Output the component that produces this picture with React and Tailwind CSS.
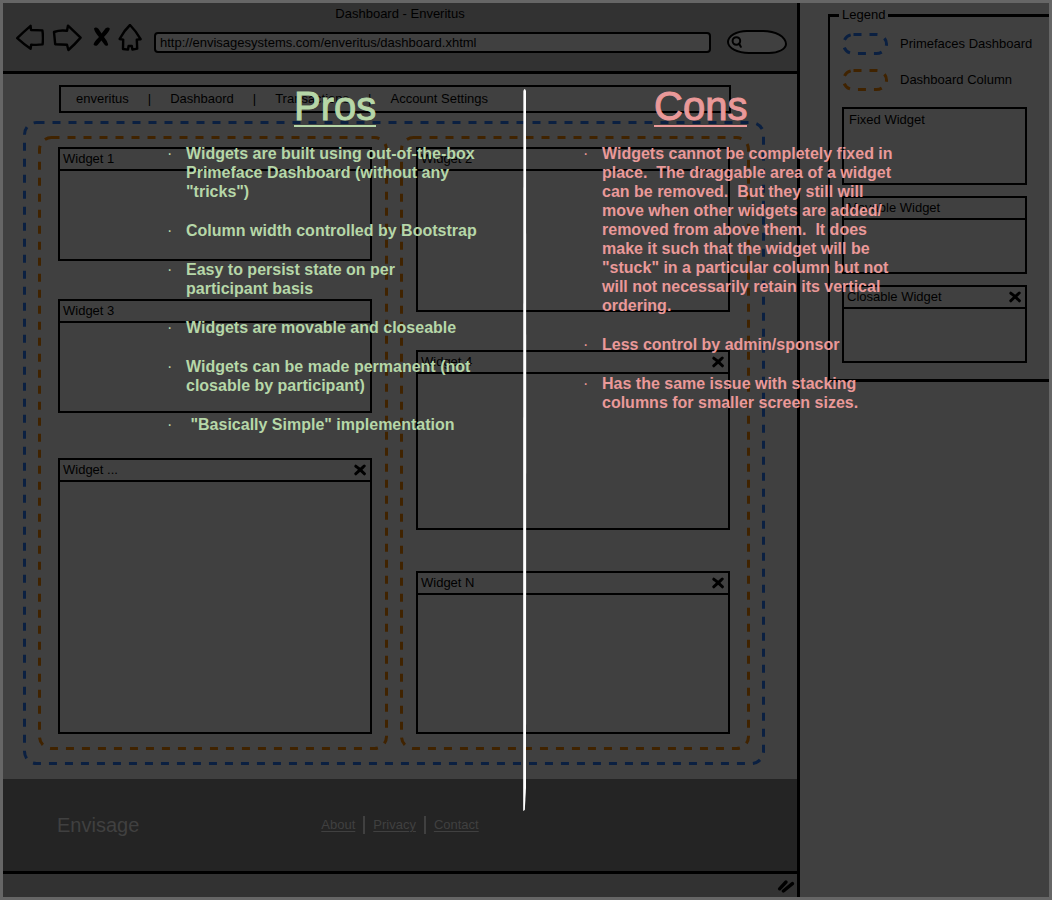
import React from "react";

const pros = [
  ["Widgets are built using out-of-the-box", "Primeface Dashboard (without any", "\"tricks\")"],
  ["Column width controlled by Bootstrap"],
  ["Easy to persist state on per", "participant basis"],
  ["Widgets are movable and closeable"],
  ["Widgets can be made permanent (not", "closable by participant)"],
  [" \"Basically Simple\" implementation"],
];

const cons = [
  [
    "Widgets cannot be completely fixed in",
    "place.  The draggable area of a widget",
    "can be removed.  But they still will",
    "move when other widgets are added/",
    "removed from above them.  It does",
    "make it such that the widget will be",
    "\"stuck\" in a particular column but not",
    "will not necessarily retain its vertical",
    "ordering.",
  ],
  ["Less control by admin/sponsor"],
  ["Has the same issue with stacking", "columns for smaller screen sizes."],
];

function DashedFrame({ className, radius = 12 }) {
  return (
    <svg aria-hidden="true" className={`pointer-events-none absolute inset-0 h-full w-full ${className}`}>
      <rect
        x="1.5"
        y="1.5"
        rx={radius}
        className="h-[calc(100%-3px)] w-[calc(100%-3px)]"
        fill="none"
        stroke="currentColor"
        strokeWidth="3"
        strokeDasharray="8 8"
      />
    </svg>
  );
}

function CloseIcon() {
  return (
    <svg viewBox="0 0 12 12" className="h-3 w-3" fill="none" stroke="#000" strokeLinecap="round" aria-hidden="true">
      <path d="M1.8 2.2 C4 3.6 8 7.4 10.4 9.8" strokeWidth="3" />
      <path d="M10.2 2 C8 4 4.6 7 1.8 9.8" strokeWidth="3" />
    </svg>
  );
}

function Widget({ title, closable, className }) {
  return (
    <section className={`border-2 border-black ${className}`}>
      <header className="flex h-[22px] items-center justify-between border-b-2 border-black pr-1 pl-[3px]">
        <h3>{title}</h3>
        {closable && (
          <button type="button" aria-label={`Close ${title}`}>
            <CloseIcon />
          </button>
        )}
      </header>
    </section>
  );
}

function Notes({ title, items, className, headingClass }) {
  return (
    <section className={`min-w-0 ${className}`}>
      <h2 className={`text-[40px] leading-[38px] [-webkit-text-stroke:1px_currentColor] ${headingClass}`}>
        <span className="inline-block border-b-2 border-current">{title}</span>
      </h2>
      <ul className="mt-[17px] flex flex-col gap-5 text-base leading-[19px] font-bold">
        {items.map((lines) => (
          <li key={lines[0]} className="flex">
            <span className="w-5 shrink-0 pl-px font-normal" aria-hidden="true">·</span>
            <div>
              {lines.map((line) => (
                <span key={line} className="block whitespace-pre">{line}</span>
              ))}
            </div>
          </li>
        ))}
      </ul>
    </section>
  );
}

function Toolbar() {
  const icon = { fill: "none", stroke: "#000", strokeWidth: 2.4, strokeLinejoin: "round", strokeLinecap: "round" };
  return (
    <div className="flex items-center pr-[10px] pl-[13px]">
      <div className="flex items-center gap-2">
        <button type="button" aria-label="Back">
          <svg viewBox="0 0 28 28" className="h-7 w-7" {...icon}>
            <path d="M1.2 14.2 Q8 7.4 14.6 1.8 L15 6 L26.4 6.4 Q27.4 13 26.6 20.4 Q21 21.2 15.2 20.6 L14.6 24.8 Q8 20.4 1.2 14.2 Z" />
          </svg>
        </button>
        <button type="button" aria-label="Forward">
          <svg viewBox="0 0 30 28" className="h-7 w-[30px]" {...icon}>
            <path d="M2 8 Q8 5.8 15 6.8 L16 1.6 L28.6 13.6 Q23 20.2 16.4 26 L15 20.8 L3.2 20.2 Z" />
          </svg>
        </button>
        <button type="button" aria-label="Stop">
          <svg viewBox="0 0 20 28" className="h-7 w-5" fill="#000">
            <path d="M4 4.6 Q5.6 2.4 8.4 4.8 L11.6 9.6 L15.6 4.2 Q18.4 2.6 19.8 4.6 Q20 7 14 13 Q17.4 17 18.2 20.6 Q17.6 22.8 15 21.2 L11.4 16.4 L7.6 21 Q5.4 22.8 3.6 20.8 Q3.4 18.6 9 13 Q4.4 8 4 4.6 Z" />
          </svg>
        </button>
        <button type="button" aria-label="Home">
          <svg viewBox="0 0 24 28" className="h-7 w-6" {...icon}>
            <path d="M12 1 Q17.6 6.6 22.6 15.2 L18.8 15.6 L19.2 24.6 L14.4 25.6 L13.8 22 L10.6 22 L10 25.6 L5 25 L5.2 15.6 L1.6 15 Q6 6.6 12 1 Z" />
          </svg>
        </button>
      </div>
      <input
        type="text"
        aria-label="Address"
        defaultValue="http://envisagesystems.com/enveritus/dashboard.xhtml"
        className="mt-2 ml-3 h-[21px] min-w-0 flex-1 rounded-[4px] border-2 border-black bg-[#404040] px-1 text-black"
      />
      <label className="mt-2 ml-4 flex h-6 w-[60px] items-center rounded-[20px_24px_18px_22px/12px_14px_10px_12px] border-2 border-black bg-[#404040] pl-[2px]">
        <svg viewBox="0 0 12 12" className="h-3 w-3 shrink-0" fill="none" stroke="#000" strokeWidth="2" strokeLinecap="round" aria-hidden="true">
          <circle cx="5.4" cy="5" r="3.8" />
          <path d="M8 7.6 L9.8 10.8" />
        </svg>
        <input type="search" aria-label="Search" className="w-full min-w-0 bg-transparent outline-none" />
      </label>
    </div>
  );
}

function Browser() {
  return (
    <div className="flex min-w-0 flex-1 flex-col border-r-3 border-black">
      <header className="h-[71px] border-b-3 border-black bg-[#323232]">
        <h1 className="pt-[3px] text-center leading-4">Dashboard - Enveritus</h1>
        <Toolbar />
      </header>

      <main className="flex-1 bg-[#404040] pt-[11px] pr-8 pb-[14px] pl-5">
        <nav className="mr-[34px] ml-9 flex h-[28px] items-center gap-[17px] border-2 border-black pl-[15px]">
          <a href="#enveritus">enveritus</a>
          <span className="px-0.5">|</span>
          <a href="#dashboard">Dashbaord</a>
          <span className="px-0.5">|</span>
          <a href="#transactions">Transactions</a>
          <span className="px-0.5">|</span>
          <a href="#settings">Account Settings</a>
        </nav>

        <div className="relative mt-2 grid grid-cols-2 gap-3 p-[15px]">
          <DashedFrame className="text-[#0b2041]" />
          <div className="relative flex flex-col pt-[11px] pr-4 pb-4 pl-5">
            <DashedFrame className="text-[#402300]" />
            <Widget title="Widget 1" className="h-[114px]" />
            <Widget title="Widget 3" className="mt-[38px] h-[114px]" />
            <Widget title="Widget ..." closable className="mt-[45px] h-[276px]" />
          </div>
          <div className="relative flex flex-col pt-[11px] pr-5 pb-4 pl-4">
            <DashedFrame className="text-[#402300]" />
            <Widget title="Widget 2" className="h-[165px]" />
            <Widget title="Widget 4" closable className="mt-[38px] h-[180px]" />
            <Widget title="Widget N" closable className="mt-[41px] h-[163px]" />
          </div>
        </div>
      </main>

      <footer className="grid h-[92px] grid-cols-[1fr_auto_1fr] items-center bg-[#242424] text-[#404040]">
        <div className="pl-[54px] text-xl">Envisage</div>
        <div className="flex items-center leading-4">
          <a href="#about" className="underline underline-offset-2">About</a>
          <span className="mx-2 h-[18px] w-0.5 bg-[#404040]" />
          <a href="#privacy" className="underline underline-offset-2">Privacy</a>
          <span className="mx-2 h-[18px] w-0.5 bg-[#404040]" />
          <a href="#contact" className="underline underline-offset-2">Contact</a>
        </div>
      </footer>
      <div className="flex h-[26px] items-center justify-end border-t-3 border-black bg-[#323232] pr-[2px]">
        <svg viewBox="0 0 18 14" className="h-[14px] w-[18px]" stroke="#000" strokeWidth="3.4" strokeLinecap="round" aria-hidden="true">
          <path d="M2.6 9.8 L9 3" />
          <path d="M6.4 12 L15.4 4.6" />
        </svg>
      </div>
    </div>
  );
}

function LegendKey({ color, label }) {
  return (
    <div className="flex items-center whitespace-nowrap">
      <span className="relative h-[22px] w-[46px] shrink-0">
        <DashedFrame className={color} radius={10} />
      </span>
      <span className="ml-3">{label}</span>
    </div>
  );
}

function Legend() {
  return (
    <aside className="w-[249px] shrink-0 bg-[#404040] pt-1 pl-7">
      <fieldset className="min-w-0 border-y-3 border-l-2 border-black pr-[22px] pb-4 pl-3">
        <legend className="-ml-[3px] px-[3px] leading-4">Legend</legend>
        <div className="pt-[10px]">
          <LegendKey color="text-[#0b2041]" label="Primefaces Dashboard" />
        </div>
        <div className="pt-[14px]">
          <LegendKey color="text-[#402300]" label="Dashboard Column" />
        </div>
        <div className="mt-4 h-[78px] border-2 border-black pt-[3px] pl-[5px]">Fixed Widget</div>
        <Widget title="Movable Widget" className="mt-[11px] h-[78px]" />
        <Widget title="Closable Widget" closable className="mt-[11px] h-[78px]" />
      </fieldset>
    </aside>
  );
}

export default function App() {
  return (
    <div className="relative flex min-h-screen overflow-hidden bg-[#666666] p-[3px] font-['Liberation_Sans',sans-serif] text-[13px] leading-4 text-black">
      <Browser />
      <Legend />
      <div className="absolute inset-0 grid grid-cols-2 pt-[87px]">
        <Notes title="Pros" items={pros} className="pl-[166px] text-[#b6d7a8]" headingClass="pl-32" />
        <Notes title="Cons" items={cons} className="pl-14 text-[#ea9999]" headingClass="pl-18" />
        <svg
          viewBox="0 0 4 724"
          preserveAspectRatio="none"
          className="absolute top-[88px] left-[calc(50%-3px)] h-[724px] w-1"
          fill="#fff"
          aria-hidden="true"
        >
          <path d="M0.4 3 Q1.6 -1 3 3 L3.2 300 L3 700 L1.8 722 L0.2 723 L0.2 360 Z" />
        </svg>
      </div>
    </div>
  );
}
